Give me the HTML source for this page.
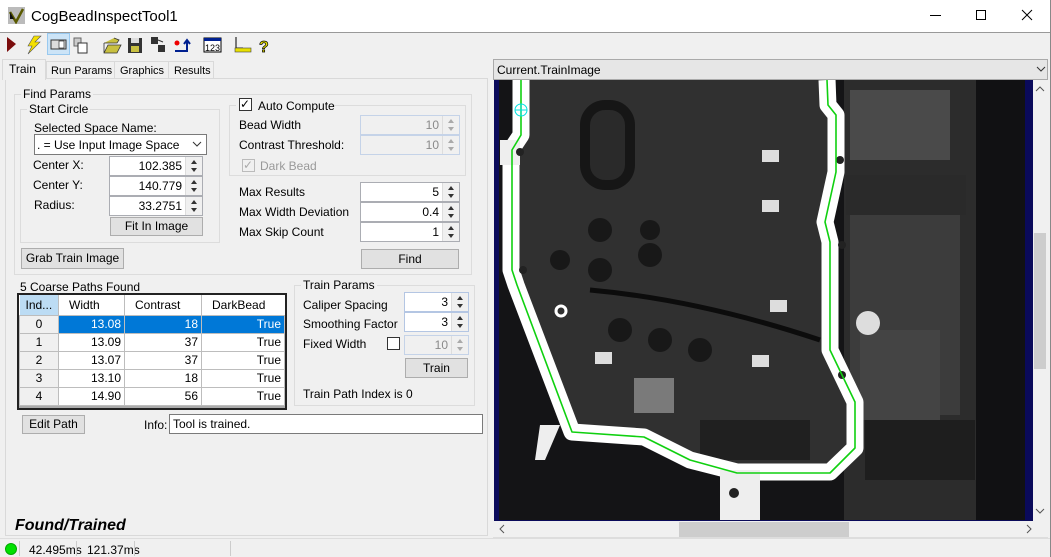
<!DOCTYPE html>
<html><head><meta charset="utf-8"><style>
*{box-sizing:border-box;margin:0;padding:0}
body{width:1051px;height:557px;overflow:hidden;background:#f0f0f0;font-family:"Liberation Sans",sans-serif;font-size:12px;color:#000;position:relative}
.a{position:absolute}
.t{position:absolute;white-space:nowrap;line-height:14px}
.grp{position:absolute;border:1px solid #dcdcdc}
.gt{position:absolute;background:#f0f0f0;padding:0 2px;line-height:13px;white-space:nowrap}
.spin{position:absolute;background:#fff;border:1px solid #7a9cd3;border-color:#abadb3}
.spin .v{position:absolute;right:20px;top:2px;line-height:14px}
.spin .ar{position:absolute;right:0;top:0;width:17px;height:100%;background:#f0f0f0;border-left:1px solid #ddd}
.spin .ar:before{content:"";position:absolute;left:5px;top:3px;border:3px solid transparent;border-bottom:4px solid #333;border-top:0}
.spin .ar:after{content:"";position:absolute;left:5px;bottom:3px;border:3px solid transparent;border-top:4px solid #333;border-bottom:0}
.dis{background:#f0f0f0;color:#8a8a8a}
.dis .ar:before{border-bottom-color:#aaa}.dis .ar:after{border-top-color:#aaa}
.btn{position:absolute;background:#e1e1e1;border:1px solid #adadad;text-align:center;line-height:17px}
.cb{position:absolute;width:13px;height:13px;border:1px solid #333;background:#fff}
table{border-collapse:collapse}
td{border:1px solid #bdbdbd;height:18px;padding:0 3px;text-align:right;line-height:16px}
</style></head><body>
<!-- title -->
<div class="a" style="left:0;top:0;width:1051px;height:32px;background:#fff;border-right:1px solid #888"></div>
<svg class="a" style="left:8px;top:7px" width="17" height="17"><rect width="17" height="17" fill="#bbb"/><path d="M2 5 L8 15 L15 2" stroke="#5a5a00" stroke-width="2.5" fill="none"/><path d="M2 5 L6 12 L2 12Z" fill="#111"/></svg>
<div class="t" style="left:31px;top:8px;font-size:15px;line-height:17px">CogBeadInspectTool1</div>
<div class="a" style="left:930px;top:15px;width:11px;height:1px;background:#000"></div>
<div class="a" style="left:976px;top:10px;width:10px;height:10px;border:1px solid #000"></div>
<svg class="a" style="left:1021px;top:9px" width="12" height="12"><path d="M1 1 L11 11 M11 1 L1 11" stroke="#000"/></svg>
<div class="a" style="left:0;top:32px;width:1051px;height:1px;background:#999"></div>
<!-- toolbar -->
<div class="a" style="left:47px;top:33px;width:23px;height:22px;background:#cce4f7;border:1px solid #99c9ef"></div>
<svg class="a" style="left:0;top:33px" width="280" height="24">
<path d="M7 4 L16 11 L7 19Z" fill="#7a0c0c"/>
<path d="M34 3 L28 13 L32 13 L28 21 L40 9 L35 9 L41 3Z" fill="#f4e000" stroke="#555" stroke-width=".6"/>
<rect x="51" y="7" width="15" height="9" fill="#ddd" stroke="#333"/><rect x="59" y="8" width="5" height="7" fill="#fff" stroke="#333" stroke-width=".7"/>
<rect x="74" y="5" width="7" height="8" fill="#ccc" stroke="#666"/><rect x="78" y="10" width="9" height="10" fill="#fff" stroke="#333"/>
<path d="M104 10 L117 10 L119 7 L114 5 M104 10 L104 20 L117 20 L121 12 L108 12 L104 20" fill="#c8c040" stroke="#333" stroke-width=".8"/>
<rect x="128" y="5" width="14" height="15" fill="#333"/><rect x="131" y="5" width="8" height="5" fill="#ddd"/><rect x="131" y="13" width="8" height="6" fill="#c8c040"/>
<rect x="151" y="4" width="7" height="7" fill="#333"/><rect x="158" y="12" width="7" height="7" fill="#333"/><path d="M158 7 L163 9" stroke="#333"/>
<circle cx="177" cy="10" r="2.5" fill="#e00"/><path d="M175 18 L187 18 L187 8 M184 11 L187 7 L190 11" stroke="#002090" stroke-width="2" fill="none"/>
<rect x="204" y="5" width="17" height="14" fill="#fff" stroke="#000"/><rect x="204" y="5" width="17" height="3" fill="#002090"/><text x="205" y="18" font-size="9" font-family="Liberation Sans">123</text>
<path d="M236 4 L236 15 L243 15" fill="none" stroke="#000"/><rect x="235" y="15" width="16" height="4" fill="#e8e000" stroke="#444" stroke-width=".6"/>
<text x="259" y="19" font-size="16" font-weight="bold" fill="#e8e000" stroke="#000" stroke-width=".7" font-family="Liberation Sans">?</text>
</svg>
<!-- tabs -->
<div class="a" style="left:5px;top:78px;width:483px;height:458px;border:1px solid #d9d9d9;background:#f0f0f0"></div>
<div class="a" style="left:46px;top:61px;width:168px;height:18px;border:1px solid #d9d9d9;background:#f0f0f0"></div>
<div class="a" style="left:114px;top:61px;width:1px;height:18px;background:#d9d9d9"></div>
<div class="a" style="left:168px;top:61px;width:1px;height:18px;background:#d9d9d9"></div>
<div class="a" style="left:2px;top:59px;width:44px;height:21px;border:1px solid #d9d9d9;border-bottom:none;background:#f0f0f0"></div>
<div class="t" style="left:9px;top:62px;font-size:12px">Train</div>
<div class="t" style="left:51px;top:64px;font-size:11px">Run Params</div>
<div class="t" style="left:120px;top:64px;font-size:11px">Graphics</div>
<div class="t" style="left:174px;top:64px;font-size:11px">Results</div>
<!-- find params -->
<div class="grp" style="left:14px;top:94px;width:458px;height:181px"></div>
<div class="gt" style="left:21px;top:88px">Find Params</div>
<div class="grp" style="left:20px;top:109px;width:200px;height:134px"></div>
<div class="gt" style="left:27px;top:103px">Start Circle</div>
<div class="t" style="left:34px;top:121px">Selected Space Name:</div>
<div class="a" style="left:34px;top:134px;width:173px;height:21px;background:#fff;border:1px solid #7a7a7a"></div>
<div class="t" style="left:37px;top:138px">. = Use Input Image Space</div>
<svg class="a" style="left:192px;top:141px" width="10" height="6"><path d="M1 1 L5 5 L9 1" stroke="#333" fill="none"/></svg>
<div class="t" style="left:33px;top:158px">Center X:</div>
<div class="spin" style="left:109px;top:156px;width:94px;height:20px"><span class="v">102.385</span><span class="ar"></span></div>
<div class="t" style="left:33px;top:178px">Center Y:</div>
<div class="spin" style="left:109px;top:176px;width:94px;height:20px"><span class="v">140.779</span><span class="ar"></span></div>
<div class="t" style="left:34px;top:198px">Radius:</div>
<div class="spin" style="left:109px;top:196px;width:94px;height:20px"><span class="v">33.2751</span><span class="ar"></span></div>
<div class="btn" style="left:110px;top:217px;width:93px;height:19px">Fit In Image</div>
<div class="btn" style="left:21px;top:248px;width:103px;height:21px;line-height:19px">Grab Train Image</div>
<div class="grp" style="left:229px;top:105px;width:237px;height:71px"></div>
<div class="a" style="left:236px;top:97px;width:96px;height:16px;background:#f0f0f0"></div>
<div class="cb" style="left:239px;top:98px"></div><div class="t" style="left:240px;top:97px;font-size:12px">✓</div>
<div class="t" style="left:258px;top:99px">Auto Compute</div>
<div class="t" style="left:239px;top:118px">Bead Width</div>
<div class="spin dis" style="left:360px;top:115px;width:100px;height:20px;border-color:#c5d3e8"><span class="v">10</span><span class="ar"></span></div>
<div class="t" style="left:239px;top:138px">Contrast Threshold:</div>
<div class="spin dis" style="left:360px;top:135px;width:100px;height:20px;border-color:#c5d3e8"><span class="v">10</span><span class="ar"></span></div>
<div class="cb" style="left:242px;top:159px;border-color:#bbb;background:#f0f0f0"></div><div class="t" style="left:243px;top:158px;color:#aaa">✓</div>
<div class="t" style="left:260px;top:159px;color:#999">Dark Bead</div>
<div class="t" style="left:239px;top:185px">Max Results</div>
<div class="spin" style="left:360px;top:182px;width:100px;height:20px"><span class="v">5</span><span class="ar"></span></div>
<div class="t" style="left:239px;top:205px">Max Width Deviation</div>
<div class="spin" style="left:360px;top:202px;width:100px;height:20px"><span class="v">0.4</span><span class="ar"></span></div>
<div class="t" style="left:239px;top:225px">Max Skip Count</div>
<div class="spin" style="left:360px;top:222px;width:100px;height:20px"><span class="v">1</span><span class="ar"></span></div>
<div class="btn" style="left:361px;top:249px;width:98px;height:20px;line-height:18px">Find</div>
<!-- grid -->
<div class="t" style="left:20px;top:280px">5 Coarse Paths Found</div>
<div class="a" style="left:17px;top:293px;width:270px;height:117px;border:2px solid #222;background:#ababab"></div>
<table class="a" style="left:19px;top:295px;width:266px;background:#fff">
<tr style="height:20px"><td style="width:39px;text-align:left;background:#bcdcf4;border:none;padding-left:6px">Ind...</td><td style="width:66px;text-align:left;padding-left:10px;border-top:none">Width</td><td style="width:77px;text-align:left;padding-left:10px;border-top:none">Contrast</td><td style="text-align:left;padding-left:10px;border-top:none;border-right:none">DarkBead</td></tr>
<tr><td style="text-align:center;background:#f0f0f0">0</td><td style="background:#0078d7;color:#fff">13.08</td><td style="background:#0078d7;color:#fff">18</td><td style="background:#0078d7;color:#fff">True</td></tr>
<tr><td style="text-align:center;background:#f0f0f0">1</td><td>13.09</td><td>37</td><td>True</td></tr>
<tr><td style="text-align:center;background:#f0f0f0">2</td><td>13.07</td><td>37</td><td>True</td></tr>
<tr><td style="text-align:center;background:#f0f0f0">3</td><td>13.10</td><td>18</td><td>True</td></tr>
<tr><td style="text-align:center;background:#f0f0f0">4</td><td>14.90</td><td>56</td><td>True</td></tr>
</table>
<!-- train params -->
<div class="grp" style="left:294px;top:285px;width:181px;height:121px"></div>
<div class="gt" style="left:301px;top:279px">Train Params</div>
<div class="t" style="left:303px;top:298px">Caliper Spacing</div>
<div class="spin" style="left:404px;top:292px;width:65px;height:20px;border-color:#b4c6e3"><span class="v">3</span><span class="ar"></span></div>
<div class="t" style="left:303px;top:317px">Smoothing Factor</div>
<div class="spin" style="left:404px;top:312px;width:65px;height:20px;border-color:#b4c6e3"><span class="v">3</span><span class="ar"></span></div>
<div class="t" style="left:303px;top:337px">Fixed Width</div>
<div class="cb" style="left:387px;top:337px"></div>
<div class="spin dis" style="left:404px;top:335px;width:65px;height:20px;border-color:#c5d3e8"><span class="v">10</span><span class="ar"></span></div>
<div class="btn" style="left:405px;top:358px;width:63px;height:20px;line-height:18px">Train</div>
<div class="t" style="left:303px;top:387px">Train Path Index is 0</div>
<div class="btn" style="left:22px;top:415px;width:63px;height:19px">Edit Path</div>
<div class="t" style="left:144px;top:418px">Info:</div>
<div class="a" style="left:169px;top:414px;width:314px;height:20px;background:#fff;border:1px solid #7a7a7a"></div>
<div class="t" style="left:173px;top:417px">Tool is trained.</div>
<div class="t" style="left:15px;top:517px;font-size:16px;font-weight:bold;font-style:italic;line-height:18px">Found/Trained</div>
<!-- status -->
<div class="a" style="left:0;top:538px;width:1051px;height:1px;background:#ddd"></div>
<div class="a" style="left:5px;top:543px;width:12px;height:12px;border-radius:50%;background:#00e000;border:1px solid #0a0"></div>
<div class="a" style="left:19px;top:541px;width:1px;height:15px;background:#ccc"></div>
<div class="t" style="left:29px;top:543px">42.495ms</div>
<div class="a" style="left:76px;top:541px;width:1px;height:15px;background:#ccc"></div>
<div class="t" style="left:87px;top:543px">121.37ms</div>
<div class="a" style="left:134px;top:541px;width:1px;height:15px;background:#ccc"></div>
<div class="a" style="left:230px;top:541px;width:1px;height:15px;background:#ccc"></div>
<!-- image pane -->
<div class="a" style="left:493px;top:59px;width:555px;height:21px;background:#e6e6e6;border:1px solid #aaa"></div>
<div class="t" style="left:497px;top:63px">Current.TrainImage</div>
<svg class="a" style="left:1036px;top:66px" width="10" height="6"><path d="M1 1 L5 5 L9 1" stroke="#333" fill="none"/></svg>
<div class="a" style="left:494px;top:80px;width:539px;height:441px;background:#0a0a5a"></div>
<svg class="a" style="left:499px;top:80px" width="526" height="440" viewBox="499 80 526 440">
<rect x="499" y="80" width="526" height="440" fill="#141416"/>
<path d="M844 80 L1025 80 L1025 520 L844 520Z" fill="#2c2c2c"/>
<rect x="976" y="80" width="49" height="440" fill="#111113"/>
<rect x="846" y="175" width="120" height="40" fill="#2a2a2a"/>
<rect x="850" y="90" width="100" height="70" fill="#4a4a4a"/>
<rect x="850" y="215" width="110" height="200" fill="#3c3c3c"/>
<rect x="860" y="330" width="80" height="90" fill="#444"/>
<rect x="865" y="420" width="110" height="60" fill="#1e1e1e"/>
<circle cx="868" cy="323" r="12" fill="#ddd"/>
<path d="M522 80 L836 80 L836 110 L828 220 L832 350 L858 402 L858 448 L830 475 L737 475 L644 435 L576 435 L511 282 L512 140Z" fill="#303030"/>
<rect x="580" y="100" width="55" height="90" rx="25" fill="#161616"/>
<rect x="590" y="110" width="35" height="70" rx="15" fill="#2a2a2a"/>
<path d="M590 290 Q700 300 820 340" stroke="#0c0c0c" stroke-width="5" fill="none"/>
<rect x="634" y="378" width="40" height="35" fill="#7a7a7a"/>
<rect x="700" y="420" width="110" height="40" fill="#202020"/>
<g fill="#181818"><circle cx="600" cy="230" r="12"/><circle cx="650" cy="255" r="12"/><circle cx="600" cy="270" r="12"/><circle cx="650" cy="230" r="10"/><circle cx="620" cy="330" r="12"/><circle cx="660" cy="340" r="12"/><circle cx="700" cy="350" r="12"/><circle cx="560" cy="260" r="10"/></g>
<g fill="#ddd"><rect x="762" y="150" width="17" height="12"/><rect x="762" y="200" width="17" height="12"/><rect x="770" y="300" width="17" height="12"/><rect x="595" y="352" width="17" height="12"/><rect x="752" y="355" width="17" height="12"/></g>
<path d="M521 80 L521 135 L511 150 L511 270 L516 285 L572 432 L644 437 L690 460 L737 472 L830 472 L855 448 L855 402 L830 350 L830 242 L825 222 L836 172 L836 115 L828 105 L827 80" fill="none" stroke="#fff" stroke-width="17" stroke-linejoin="round"/>
<path d="M500 140 L520 140 L520 165 L500 165Z M540 425 L560 425 L545 460 L535 460Z M720 470 L760 470 L760 520 L720 520Z" fill="#eee"/>
<circle cx="520" cy="152" r="4" fill="#222"/><circle cx="523" cy="270" r="4" fill="#222"/><circle cx="840" cy="160" r="4" fill="#222"/><circle cx="842" cy="245" r="4" fill="#222"/><circle cx="842" cy="375" r="4" fill="#222"/><circle cx="734" cy="493" r="5" fill="#222"/>
<circle cx="561" cy="311" r="5" fill="none" stroke="#fff" stroke-width="3"/>
<path d="M521 80 L521 135 L512 150 L512 270 L517 285 L572 432 L644 437 L690 460 L737 473 L830 473 L855 448 L855 402 L830 350 L830 242 L825 222 L836 172 L836 115 L828 105 L827 80" fill="none" stroke="#10d010" stroke-width="1.6" stroke-linejoin="round"/>
<circle cx="521" cy="110" r="6" fill="none" stroke="#00e0e0"/><path d="M515 110 L527 110 M521 104 L521 116" stroke="#00e0e0"/>
</svg>
<!-- scrollbars -->
<div class="a" style="left:1033px;top:80px;width:14px;height:441px;background:#f0f0f0"></div>
<div class="a" style="left:1034px;top:233px;width:12px;height:136px;background:#cdcdcd"></div>
<svg class="a" style="left:1035px;top:85px" width="10" height="430"><path d="M1 6 L5 2 L9 6 M1 424 L5 428 L9 424" stroke="#555" fill="none"/></svg>
<div class="a" style="left:494px;top:521px;width:539px;height:16px;background:#f0f0f0"></div>
<div class="a" style="left:679px;top:522px;width:170px;height:15px;background:#cdcdcd"></div>
<svg class="a" style="left:498px;top:524px" width="535" height="10"><path d="M6 1 L2 5 L6 9 M529 1 L533 5 L529 9" stroke="#555" fill="none"/></svg>
<div class="a" style="left:493px;top:537px;width:555px;height:1px;background:#ddd"></div>
<div class="a" style="left:1050px;top:0;width:1px;height:557px;background:#888"></div>
</body></html>
